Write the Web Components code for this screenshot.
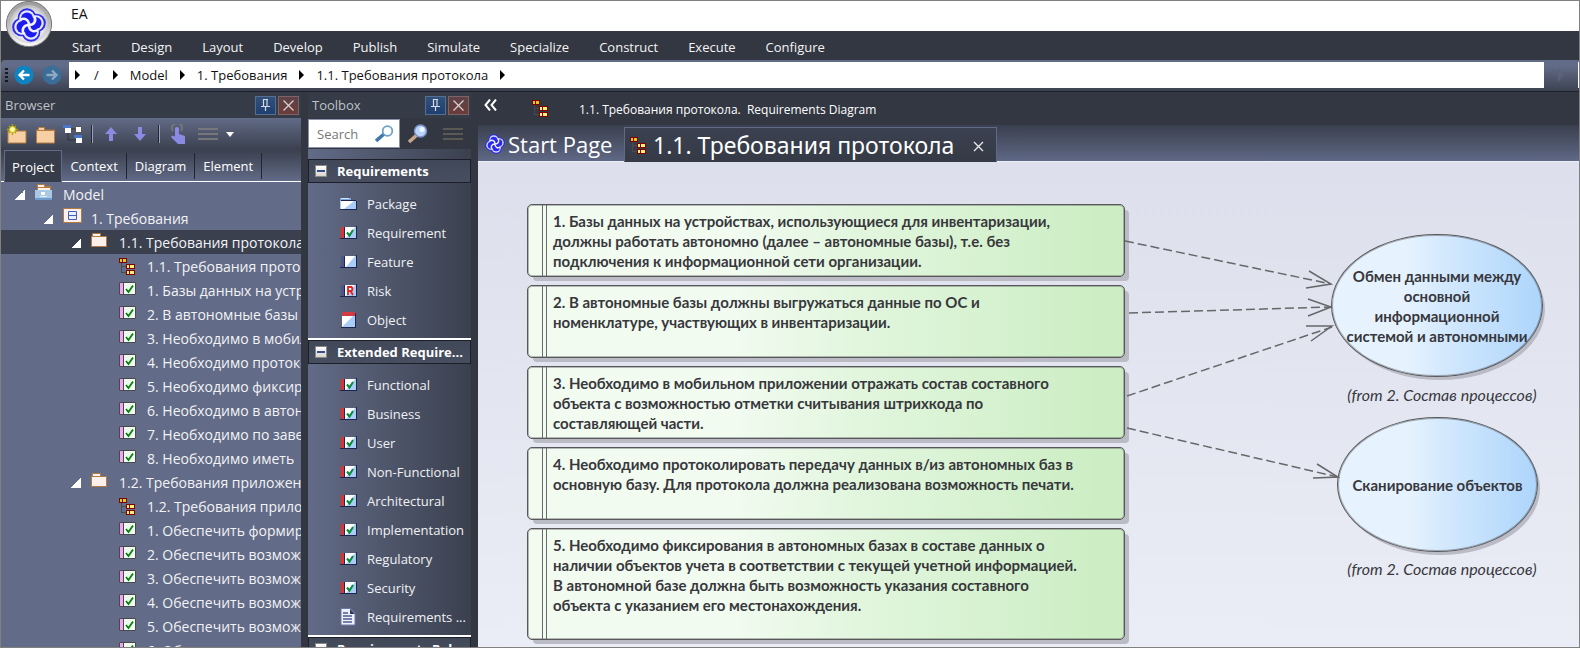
<!DOCTYPE html>
<html lang="ru">
<head>
<meta charset="utf-8">
<title>EA</title>
<style>
  html, body { margin: 0; height: 100%; }
  body {
    --ui: "Open Sans", "Noto Sans", sans-serif;
    --diagram: Lato, "Noto Sans", sans-serif;
    --dark: #323742;
    --slate: #626b87;
    --deep: #3a404e;
    font: 13px/16px var(--ui);
    color: #fff;
    overflow: hidden;
  }
</style>
</head>
<body>
<ea-app></ea-app>

<template id="app-template">
  <style>
    :host { display: flex; flex-direction: column; height: 100vh; box-sizing: border-box; border: 1px solid #808080; background: var(--dark); overflow: hidden; }
    .dock { flex: 1; min-height: 0; display: grid; grid-template-columns: 300px 163px minmax(0, 1fr); grid-template-rows: minmax(0, 1fr); column-gap: 7px; border-top: 1px solid #1d2029; }
    .dock > * { min-height: 0; min-width: 0; }
  </style>
  <ea-titlebar>EA</ea-titlebar>
  <ea-menubar></ea-menubar>
  <ea-address></ea-address>
  <div class="dock">
    <ea-browser></ea-browser>
    <ea-toolbox></ea-toolbox>
    <ea-document></ea-document>
  </div>
</template>

<template id="title-template">
  <style>
    :host { display: flex; align-items: center; position: relative; height: 30px; padding-left: 70px; background: #fff; color: #111; font-size: 14px; }
    span { padding-bottom: 4px; }
    .orb { position: absolute; left: 3px; top: 0; width: 50px; height: 47px; padding: 0; border: 0; background: none; z-index: 2; }
    svg { display: block; }
  </style>
  <span><slot></slot></span>
  <button class="orb" aria-label="Application menu">
    <svg width="50" height="47" viewBox="0 0 50 47">
      <defs>
        <linearGradient id="m" x1="0" y1="0" x2="0" y2="1"><stop offset="0" stop-color="#9c9c9c"/><stop offset=".5" stop-color="#bdbdbd"/><stop offset="1" stop-color="#fafafa"/></linearGradient>
        <radialGradient id="n" cx=".5" cy=".55" r=".55"><stop offset="0" stop-color="#fff"/><stop offset=".7" stop-color="#e6e6ec"/><stop offset="1" stop-color="#b8b8b8"/></radialGradient>
      </defs>
      <circle cx="25" cy="23" r="22.6" fill="url(#m)" stroke="#777" stroke-width="1"/>
      <circle cx="25" cy="23" r="19" fill="url(#n)"/>
      <g transform="translate(25 24)">
        <g fill="#2a2ae8"><circle cx="-2" cy="-7.500" r="9.300"/><circle cx="7.500" cy="-2" r="9.300"/><circle cx="2" cy="7.500" r="9.300"/><circle cx="-7.500" cy="2" r="9.300"/></g>
        <g fill="#e4e6ff"><circle cx="-2" cy="-7" r="7.800"/><circle cx="7" cy="-2" r="7.800"/><circle cx="2" cy="7" r="7.800"/><circle cx="-7" cy="2" r="7.800"/></g>
        <g fill="#1c1cee"><circle r="5"/><circle cx="-2" cy="-6.500" r="6"/><circle cx="6.500" cy="-2" r="6"/><circle cx="2" cy="6.500" r="6"/><circle cx="-6.500" cy="2" r="6"/></g>
        <path d="M-9-5C-4-8 0-5 0 0S4 8 9 5M5-9C8-4 5 0 0 0S-8 4-5 9" fill="none" stroke="#f2f3ff" stroke-width="2.600"/>
      </g>
    </svg>
  </button>
</template>

<template id="menu-template">
  <style>
    :host { display: block; background: var(--dark); }
    nav { display: flex; gap: 30px; height: 29px; align-items: center; padding: 2px 0 0 71px; box-sizing: border-box; }
    button { all: unset; font-size: 13px; color: #f4f4f4; }
  </style>
  <nav></nav>
</template>

<template id="address-template">
  <style>
    :host { display: flex; align-items: center; height: 31px; flex: none; box-sizing: border-box; padding-bottom: 1px; background: linear-gradient(var(--slate) 20%, #3c4251); border-radius: 4px 0 0 0; }
    .grip { width: 3px; height: 15px; margin: 0 6px 0 4px; background: repeating-linear-gradient(#15181f 0 2px, transparent 2px 4px); }
    .nav { all: unset; width: 20px; height: 20px; margin-right: 8px; }
    nav { flex: 1; display: flex; align-items: center; gap: 12px; background: #fff; height: 26px; padding-left: 6px; margin-right: 13px; }
    .nav + nav { margin-left: -1px; }
    a { color: #111; text-decoration: none; font-size: 13px; white-space: nowrap; }
    a.root { padding: 0 2px; }
    svg { display: block; }
    .end { width: 1px; height: 26px; background: #fff; margin-left: 13px; }
  </style>
  <div class="grip"></div>
  <button class="nav" aria-label="Back"><svg width="20" height="20"><circle cx="10" cy="10" r="9.600" fill="#0f83c0"/><path d="M15.500 10H6M10 5.500L5.500 10l4.500 4.500" fill="none" stroke="#fff" stroke-width="2.300"/></svg></button>
  <button class="nav" aria-label="Forward"><svg width="20" height="20"><circle cx="10" cy="10" r="9.600" fill="#3a6d97"/><path d="M4.500 10H14M10 5.500l4.500 4.500-4.500 4.500" fill="none" stroke="#8fa9c4" stroke-width="2.300"/></svg></button>
  <nav aria-label="Path"></nav>
  <svg width="8" height="14"><path d="M1 0l6 7-6 7z" fill="#5a617a"/></svg>
  <div class="end"></div>
</template>

<template id="panel-template">
  <style>
    :host { display: flex; align-items: center; flex: none; height: 26px; gap: 2px; padding: 0 2px 0 4px; background: #353b47; color: #bfc2c6; font-size: 13px; box-sizing: border-box; }
    span { flex: 1; }
    button { width: 21px; height: 19px; padding: 0; border: 1px solid #55708f; background: linear-gradient(#32507c, #1e3f70); display: grid; place-items: center; }
    .x { border-color: #7a6468; background: linear-gradient(#5f4247, #6b3c39); }
  </style>
  <span><slot></slot></span>
  <button aria-label="Pin"><svg width="11" height="12"><path d="M3.500 0v7M7 0v7M3 .5h5M1 7.500h9M5.500 8v4" stroke="#d4dbe6" stroke-width="1.200" fill="none"/></svg></button>
  <button class="x" aria-label="Close"><svg width="11" height="11"><path d="M.5.5l10 10M10.500.5l-10 10" stroke="#d8d0d0" stroke-width="1.300"/></svg></button>
</template>

<template id="browser-template">
  <style>
    :host { display: flex; flex-direction: column; background: var(--slate); overflow: hidden; }
    .tools { display: flex; align-items: center; flex: none; height: 32px; padding-left: 6px; box-sizing: border-box; background: linear-gradient(var(--slate), var(--deep)); }
    .tools button { all: unset; height: 20px; }
    .tools svg { display: block; }
    .sep { width: 2px; height: 18px; box-sizing: border-box; border-left: 1px solid #22262f; background: #9aa2bb; }
    .tabs { display: flex; align-items: center; flex: none; height: 32px; box-sizing: border-box; padding-left: 3px; border-bottom: 1px solid #fff; background: linear-gradient(var(--deep), var(--slate)); }
    .tabs button { all: unset; height: 26px; line-height: 26px; padding: 0 8px; border-right: 1px solid #20242d; font-size: 13px; }
    .tabs button[aria-selected=true] { height: 32px; line-height: 32px; padding: 0 7px; border: 1px solid var(--slate); border-bottom: 0; background: #363c49; box-sizing: border-box; margin-bottom: -1px; }
  </style>
  <ea-panel-title>Browser</ea-panel-title>
  <div class="tools">
    <button aria-label="New model"><svg width="20" height="20"><path d="M1 7h18v12H1z" fill="#f7cfa5" stroke="#b57c3c"/><path d="M5.500 0v11M0 5.500h11M2 2l7 7M9 2L2 9" stroke="#b3a400" stroke-width="1.400"/><circle cx="5.500" cy="5.500" r="3" fill="#fffbb0" stroke="#c8b800"/></svg></button>
    <button style="margin-left:9px" aria-label="New package"><svg width="19" height="20"><path d="M.5 6h2V3.500h6V6h10v13H.5z" fill="#f7cfa5" stroke="#b57c3c"/><path d="M1 6.500h17" stroke="#b57c3c"/></svg></button>
    <button style="margin-left:8px" aria-label="New diagram"><svg width="20" height="20"><path d="M5 8v8h8M6 5h7" stroke="#333" fill="none"/><path d="M2 3h6v6H2zM13 13h6v6h-6z" fill="#fff"/><path d="M0 1h8v3H0z" fill="#4a78c8"/><path d="M12.500 2.500h6v6h-6z" fill="#fff" stroke="#555"/><path d="M11 11h8v3h-8z" fill="#4a78c8"/></svg></button>
    <div class="sep" style="margin:0 12px 0 8px"></div>
    <button aria-label="Move up"><svg width="12" height="20"><path d="M6 3l6 7H8v7H4v-7H0z" fill="#8a8ae2"/></svg></button>
    <button style="margin-left:17px" aria-label="Move down"><svg width="12" height="20"><path d="M6 17l6-7H8V3H4v7H0z" fill="#8a8ae2"/></svg></button>
    <div class="sep" style="margin:0 10px 0 12px"></div>
    <button aria-label="Find"><svg width="16" height="20"><path d="M3 7a5 5 0 1 1 8 0" fill="none" stroke="#777" stroke-width="2"/><path d="M5 4q2-2 4 0v6l6 2v8H8l-7-7q1-2 4-.5z" fill="#8a8ae2"/></svg></button>
    <button style="margin-left:12px" aria-label="Options"><svg width="36" height="20"><path d="M0 4h20v2H0zM0 9h20v2H0zM0 14h20v2H0z" fill="#77777b"/><path d="M28 8h8l-4 5z" fill="#fff"/></svg></button>
  </div>
  <div class="tabs" role="tablist">
    <button role="tab" aria-selected="true">Project</button><button role="tab">Context</button><button role="tab">Diagram</button><button role="tab">Element</button>
  </div>
  <div role="tree" class="tree"></div>
</template>

<template id="node-template">
  <style>
    :host { display: flex; align-items: center; height: 24px; font-size: 14px; white-space: nowrap; box-sizing: border-box; color: #f2f3f6; }
    :host([selected]) { background: var(--deep); }
    :host([level="1"]) { padding-left: 14px; }
    :host([level="2"]) { padding-left: 42px; }
    :host([level="3"]) { padding-left: 70px; }
    :host([level="4"]) { padding-left: 98px; }
    .arrow { flex: none; width: 10px; height: 10px; margin: 2px 10px 0 0; }
    ea-icon { flex: none; width: 18px; height: 24px; }
    .text { padding-left: 10px; padding-top: 1px; }
    :host([open]) .arrow { background: linear-gradient(135deg, transparent 50%, #fff 50%); }
  </style>
  <span class="arrow"></span><ea-icon></ea-icon><span class="text"><slot></slot></span>
</template>

<template id="toolbox-template">
  <style>
    :host { display: flex; flex-direction: column; overflow: hidden; background: linear-gradient(90deg, var(--slate), var(--deep)); }
    .search { display: flex; align-items: center; flex: none; height: 31px; margin-bottom: 10px; background: var(--dark); }
    label { display: flex; align-items: center; width: 92px; height: 29px; padding: 0 4px 0 8px; box-sizing: border-box; background: #fff; border: 1px solid #8b93ac; }
    input { border: 0; outline: 0; padding: 0; width: 58px; flex: none; font: 13px var(--ui); background: none; }
    input::placeholder { color: #777; opacity: 1; }
    svg { display: block; flex: none; }
    button { all: unset; margin-left: 8px; }
    button + button { margin-left: 15px; }
    .sections { flex: 1; min-height: 0; overflow: hidden; }
  </style>
  <ea-panel-title>Toolbox</ea-panel-title>
  <div class="search">
    <label><input placeholder="Search" aria-label="Search"><svg width="20" height="18"><path d="M9 9l-8 7" stroke="#3d78ac" stroke-width="3.500"/><circle cx="12.500" cy="6" r="4.800" fill="#fff" stroke="#6ba0c8" stroke-width="1.800"/></svg></label>
    <button aria-label="Find toolbox item"><svg width="20" height="20"><path d="M10 10l-9 8" stroke="#c8a68c" stroke-width="3.500"/><circle cx="12.500" cy="7" r="6" fill="#b8d4f8" stroke="#7c8ec8" stroke-width="1.400"/><circle cx="14" cy="5.500" r="2.500" fill="#eef6ff"/></svg></button>
    <button aria-label="Menu"><svg width="20" height="14"><path d="M0 1h20v2H0zM0 6h20v2H0zM0 11h20v2H0z" fill="#5b5954"/></svg></button>
  </div>
  <div class="sections"></div>
</template>

<template id="section-template">
  <style>
    :host { display: block; }
    header { display: flex; align-items: center; height: 24px; padding-left: 6px; box-sizing: border-box; border: 1px solid #1c1f27; background: linear-gradient(#414858, #474e60); font-weight: 700; white-space: nowrap; }
    button { width: 12px; height: 12px; padding: 0; border: 1px solid #888; background: linear-gradient(#fff, #d8d4cc); display: grid; place-items: center; margin-right: 10px; flex: none; }
    i { width: 8px; height: 2px; background: #33508e; }
    ul { list-style: none; margin: 0; padding: 6px 0 4px; border-bottom: 2px solid #fff; }
    li { display: flex; align-items: center; height: 29px; padding-left: 32px; gap: 9px; white-space: nowrap; color: #f0f1f4; }
    ea-icon { width: 18px; height: 18px; flex: none; }
  </style>
  <header><button aria-label="Collapse"><i></i></button><slot></slot></header>
  <ul></ul>
</template>

<template id="document-template">
  <style>
    :host { display: flex; flex-direction: column; overflow: hidden; }
    .caption { display: flex; align-items: center; height: 33px; flex: none; background: var(--dark); font-size: 12px; }
    .caption button { all: unset; margin: 0 35px 4px 6px; width: 13px; }
    .caption ea-icon { width: 18px; height: 18px; margin-right: 29px; }
    .caption span { padding-top: 3px; white-space: pre; }
    .tabs { display: flex; align-items: flex-end; height: 37px; flex: none; box-sizing: border-box; border-bottom: 1px solid #eef0f8; background: linear-gradient(var(--deep), #5f6886); }
    .tabs button { all: unset; display: flex; align-items: center; font: 22px/30px var(--ui); white-space: nowrap; height: 34px; box-sizing: border-box; }
    .tabs .start { padding-left: 7px; width: 146px; gap: 3px; }
    .start ea-icon { flex: none; width: 20px; height: 24px; }
    .tabs .doc { font: 23px/30px "Noto Sans", sans-serif; border: 1px solid #606987; border-bottom: 0; background: linear-gradient(#3b4150, #353a46); height: 35px; margin-bottom: -1px; padding: 0 12px 0 5px; gap: 5px; }
    .doc ea-icon { width: 18px; height: 20px; }
    .x { margin: 2px 0 0 14px; }
    ea-canvas { flex: 1; }
  </style>
  <div class="caption">
    <button aria-label="Collapse panels"><svg width="13" height="12"><path d="M6 .5L1.500 6 6 11.500M12 .5L7.500 6 12 11.500" fill="none" stroke="#fff" stroke-width="2"/></svg></button>
    <ea-icon name="diagram"></ea-icon>
    <span>1.1. Требования протокола.  Requirements Diagram</span>
  </div>
  <div class="tabs" role="tablist">
    <button class="start" role="tab"><ea-icon name="logo"></ea-icon>Start Page</button>
    <button class="doc" role="tab" aria-selected="true"><ea-icon name="diagram"></ea-icon>1.1. Требования протокола<svg class="x" width="11" height="11"><path d="M1 1l9 9M10 1l-9 9" stroke="#e6e6e6" stroke-width="1.400"/></svg></button>
  </div>
  <ea-canvas></ea-canvas>
</template>

<template id="canvas-template">
  <style>
    :host { display: block; position: relative; overflow: hidden; background: linear-gradient(#dde0ec, #eaedf5); color: #37373c; font: 700 15px/20px var(--diagram); }
    .cards { display: flex; flex-direction: column; gap: 8px; width: 598px; padding: 42px 0 0 49px; }
    .links { position: absolute; left: 0; top: 0; }
    .links path { fill: none; stroke: #67676a; stroke-width: 1.500; }
    .links .dash { stroke-dasharray: 9 4; }
    ea-usecase { position: absolute; }
    .exchange { left: 853px; top: 72px; width: 212px; height: 143px; }
    .scan { left: 859px; top: 255px; width: 201px; height: 135px; }
    .from { position: absolute; left: 853px; width: 222px; text-align: center; font: italic 16px/20px var(--diagram); }
    .one { top: 223px; }
    .two { top: 397px; }
  </style>
  <div class="cards">
    <ea-requirement>1. Базы данных на устройствах, использующиеся для инвентаризации,<br>должны работать автономно (далее – автономные базы), т.е. без<br>подключения к информационной сети организации.</ea-requirement>
    <ea-requirement>2. В автономные базы должны выгружаться данные по ОС и<br>номенклатуре, участвующих в инвентаризации.</ea-requirement>
    <ea-requirement>3. Необходимо в мобильном приложении отражать состав составного<br>объекта с возможностью отметки считывания штрихкода по<br>составляющей части.</ea-requirement>
    <ea-requirement>4. Необходимо протоколировать передачу данных в/из автономных баз в<br>основную базу. Для протокола должна реализована возможность печати.</ea-requirement>
    <ea-requirement tall>5. Необходимо фиксирования в автономных базах в составе данных о<br>наличии объектов учета в соответствии с текущей учетной информацией.<br>В автономной базе должна быть возможность указания составного<br>объекта с указанием его местонахождения.</ea-requirement>
  </div>
  <ea-usecase class="exchange">Обмен данными между<br>основной<br>информационной<br>системой и автономными</ea-usecase>
  <div class="from one">(from 2. Состав процессов)</div>
  <ea-usecase class="scan">Сканирование объектов</ea-usecase>
  <div class="from two">(from 2. Состав процессов)</div>
  <svg class="links" width="870" height="400">
    <path class="dash" d="M647 79L853 122"/><path d="M831 109l22 13-25 4"/>
    <path class="dash" d="M651 151l202-6"/><path d="M830 137l23 8-23 9"/>
    <path class="dash" d="M649 234l205-69"/><path d="M828 164h26l-21 15"/>
    <path class="dash" d="M649 266l211 49"/><path d="M839 302l21 13-25 1"/>
  </svg>
</template>

<template id="requirement-template">
  <style>
    :host { display: flex; box-sizing: border-box; min-height: 73px; border: 1px solid #58585b; border-radius: 5px; background: linear-gradient(90deg, #f1fbf0 35%, #e2f6de 55%, #cdeec5 95%); box-shadow: inset 0 0 0 1px #50505560, 5px 5px 0 -1px #babbc5; }
    :host([tall]) { min-height: 112px; }
    .band { width: 3px; margin-left: 14px; border: solid #6a6a6d; border-width: 0 1px; }
    .text { padding: 6px 0 0 6px; white-space: nowrap; }
  </style>
  <div class="band"></div><div class="text"><slot></slot></div>
</template>

<template id="usecase-template">
  <style>
    :host { display: grid; place-items: center; box-sizing: border-box; border: 1px solid #58585b; border-radius: 50%; background: linear-gradient(90deg, #e6f3fe 35%, #d2e8fd 55%, #add5fb); box-shadow: inset 0 0 0 1px #50505570, 3px 4px 0 -1px #babbc5; text-align: center; white-space: nowrap; }
  </style>
  <div><slot></slot></div>
</template>

<script>
const ICONS = {
  diagram: '<svg width="17" height="17" viewBox="0 0 17 17" shape-rendering="crispEdges"><path d="M2.500 5v9.500H8M2.500 8.500H8" fill="none" stroke="#4a4a50"/><path d="M0 0h8v5H0zM7 6h9v5H7zM7 12h9v5H7z" fill="#800000"/><path d="M1 1h2v3H1zM4 1h3v3H4z" fill="#d8cc20"/><path d="M8 7h2v3H8zM11 7h4v3h-4zM8 13h2v3H8zM11 13h4v3h-4z" fill="#fbf27a"/></svg>',
  logo: '<svg width="20" height="20" viewBox="0 0 20 20"><g transform="translate(10 10)"><g fill="#2a2ae8"><circle cx="-1.200" cy="-4.500" r="5.400"/><circle cx="4.500" cy="-1.200" r="5.400"/><circle cx="1.200" cy="4.500" r="5.400"/><circle cx="-4.500" cy="1.200" r="5.400"/></g><g fill="#d4d7ff"><circle cx="-1.200" cy="-4.200" r="4.500"/><circle cx="4.200" cy="-1.200" r="4.500"/><circle cx="1.200" cy="4.200" r="4.500"/><circle cx="-4.200" cy="1.200" r="4.500"/></g><g fill="#2a2aee"><circle r="3"/><circle cx="-1.200" cy="-3.800" r="3.500"/><circle cx="3.800" cy="-1.200" r="3.500"/><circle cx="1.200" cy="3.800" r="3.500"/><circle cx="-3.800" cy="1.200" r="3.500"/></g><path d="M-5.500-3C-2.500-5 0-3 0 0S2.500 5 5.500 3M3-5.500C5-2.500 3 0 0 0S-5 2.500-3 5.500" fill="none" stroke="#eef" stroke-width="1.500"/></g></svg>',
  req: '<svg width="17" height="17" viewBox="0 0 17 17"><path d="M.5.5h16v12H.5z" fill="#effbee" stroke="#4a4a4c"/><path d="M1 1h3v11H1z" fill="#f0a6f0"/><path d="M4.500 1v11" stroke="#4a4a4c"/><path d="M7 7l2.500 3L14 3.500" fill="none" stroke="#0a800a" stroke-width="1.800"/></svg>',
  folder: '<svg width="17" height="20" viewBox="0 0 17 20"><path d="M1.500 4.500V1.500h8v3h6V14.500H.5V4.500z" fill="#fdf0ea" stroke="#b07a45"/><path d="M1 4.500h14" stroke="#b07a45"/></svg>',
  model: '<svg width="18" height="22" viewBox="0 0 18 22"><path d="M2.500 8V1.500h7v2h6V8" fill="#fff3e8" stroke="#b9793c"/><path d="M2 4.500h14" stroke="#b9793c"/><path d="M0 7h17v8H0z" fill="#a9c8e6"/><path d="M0 15h17v2H0z" fill="#6f9ccc"/><path d="M6 9h4v3H6z" fill="#fff"/><path d="M5 13.500h7" stroke="#dfeaf6"/></svg>',
  view: '<svg width="19" height="20" viewBox="0 0 19 20"><path d="M.5.5h18v14H.5z" fill="#fdf0ea" stroke="#b07a45"/><path d="M5.500 3.500h8v8h-8zM5.500 7.500h8" fill="#e6eeff" stroke="#4560b8"/></svg>',
  box: (mark, edge) => `<svg width="17" height="14" viewBox="0 0 17 14"><path d="M1 1h15v11H1z" fill="#a9cdf6"/><path d="M1 1h3v11H1z" fill="${edge}"/><path d="M5 1h10L6 12H5z" fill="#fff"/><path d="M0 12.500h17M16.500 0v12M4.500 1v11" stroke="#1d2450"/>${mark}</svg>`
};
ICONS.requirement = ICONS.box('<path d="M7 6.500l2.500 3L13 4" fill="none" stroke="#058a35" stroke-width="2"/>', '#d33');
ICONS.feature = ICONS.box('', '#4c5686');
ICONS.risk = ICONS.box('<path d="M8 11V3h3.500q2 2 0 4H8M10.500 7l2.500 4" fill="none" stroke="#e82020" stroke-width="1.800"/>', '#4c5686');
ICONS.package = '<svg width="17" height="14" viewBox="0 0 17 14"><path d="M0 1h11v3H0z" fill="#7fa6dc"/><path d="M1 1h8v1H1z" fill="#cfe2fb"/><path d="M0 4h16v8H0z" fill="#a9cdf6"/><path d="M1 4h13L4 12H1z" fill="#fff"/><path d="M0 12.500h17M16.500 4v8M1 3.500h15" stroke="#1d2450"/></svg>';
ICONS.object = '<svg width="17" height="16" viewBox="0 0 17 16"><path d="M2 0h13v15H2z" fill="#a9cdf6"/><path d="M2 4h11L2 15z" fill="#fff"/><path d="M2 0h13v4H2z" fill="#d23a44"/><path d="M1 15.500h15M15.500 1v15" stroke="#1d2450"/></svg>';
ICONS.doc = '<svg width="17" height="18" viewBox="0 0 17 18"><path d="M1 .5h9l5 5V17H1z" fill="#eef1fb" stroke="#6a78a8"/><path d="M10 1v5h5z" fill="#2e3a66"/><path d="M3 5h5M3 8h9M3 11h9M3 14h9" stroke="#4d5a90" stroke-width="1.400"/></svg>';

function build(name, id, init) {
  customElements.define(name, class extends HTMLElement {
    constructor() {
      super();
      const root = this.attachShadow({ mode: 'open' });
      if (id) root.append(document.getElementById(id).content.cloneNode(true));
    }
    connectedCallback() {
      if (this.ready || !init) return;
      this.ready = true;
      init(this.shadowRoot, this);
    }
  });
}
const make = (tag, text, attrs = {}) => {
  const el = document.createElement(tag);
  if (text) el.textContent = text;
  for (const k in attrs) el.setAttribute(k, attrs[k]);
  return el;
};

build('ea-icon', null, (root, el) => {
  root.innerHTML = '<style>:host{display:grid;align-content:center;justify-content:start}svg{display:block}</style>' + (ICONS[el.getAttribute('name')] || '');
});
build('ea-titlebar', 'title-template');
build('ea-menubar', 'menu-template', root => {
  for (const t of ['Start', 'Design', 'Layout', 'Develop', 'Publish', 'Simulate', 'Specialize', 'Construct', 'Execute', 'Configure'])
    root.querySelector('nav').append(make('button', t));
});
build('ea-address', 'address-template', root => {
  const nav = root.querySelector('nav');
  const arrow = () => nav.insertAdjacentHTML('beforeend', '<svg width="5" height="10"><path d="M0 0l5 5-5 5z" fill="#000"/></svg>');
  arrow();
  for (const t of ['/', 'Model', '1. Требования', '1.1. Требования протокола']) {
    nav.append(make('a', t, t === '/' ? { href: '#', class: 'root' } : { href: '#' }));
    arrow();
  }
});
build('ea-panel-title', 'panel-template');
build('ea-tree-node', 'node-template', (root, el) => root.querySelector('ea-icon').replaceWith(make('ea-icon', '', { name: el.getAttribute('icon') })));
build('ea-browser', 'browser-template', root => {
  const rows = [
    [1, 'model', 'Model'], [2, 'view', '1. Требования'], [3, 'folder', '1.1. Требования протокола'],
    [4, 'diagram', '1.1. Требования протокола'],
    [4, 'req', '1. Базы данных на устройствах'], [4, 'req', '2. В автономные базы'],
    [4, 'req', '3. Необходимо в мобильном'], [4, 'req', '4. Необходимо протоколировать'],
    [4, 'req', '5. Необходимо фиксирования'], [4, 'req', '6. Необходимо в автономных'],
    [4, 'req', '7. Необходимо по завершении'], [4, 'req', '8. Необходимо иметь'],
    [3, 'folder', '1.2. Требования приложения'], [4, 'diagram', '1.2. Требования приложения'],
    [4, 'req', '1. Обеспечить формирование'], [4, 'req', '2. Обеспечить возможность'],
    [4, 'req', '3. Обеспечить возможность'], [4, 'req', '4. Обеспечить возможность'],
    [4, 'req', '5. Обеспечить возможность'], [4, 'req', '6. Обеспечить возможность']
  ];
  rows.forEach(([level, icon, text], i) => {
    const attrs = { level, icon, role: 'treeitem' };
    if (level < 4) attrs.open = '';
    if (i === 2) attrs.selected = '';
    root.querySelector('.tree').append(make('ea-tree-node', text, attrs));
  });
});
build('ea-tool-section', 'section-template', (root, el) => {
  for (const entry of el.getAttribute('items').split(',').filter(Boolean)) {
    const [text, icon] = entry.split(':');
    const li = make('li');
    li.append(make('ea-icon', '', { name: icon || 'requirement' }), make('span', text));
    root.querySelector('ul').append(li);
  }
});
build('ea-toolbox', 'toolbox-template', root => {
  const sections = [
    ['Requirements', 'Package:package,Requirement,Feature:feature,Risk:risk,Object:object'],
    ['Extended Require...', 'Functional,Business,User,Non-Functional,Architectural,Implementation,Regulatory,Security,Requirements ...:doc'],
    ['Requirements Rel...', '']
  ];
  for (const [title, items] of sections) root.querySelector('.sections').append(make('ea-tool-section', title, { items }));
});
build('ea-requirement', 'requirement-template');
build('ea-usecase', 'usecase-template');
build('ea-canvas', 'canvas-template');
build('ea-document', 'document-template');
build('ea-app', 'app-template');
</script>
</body>
</html>
